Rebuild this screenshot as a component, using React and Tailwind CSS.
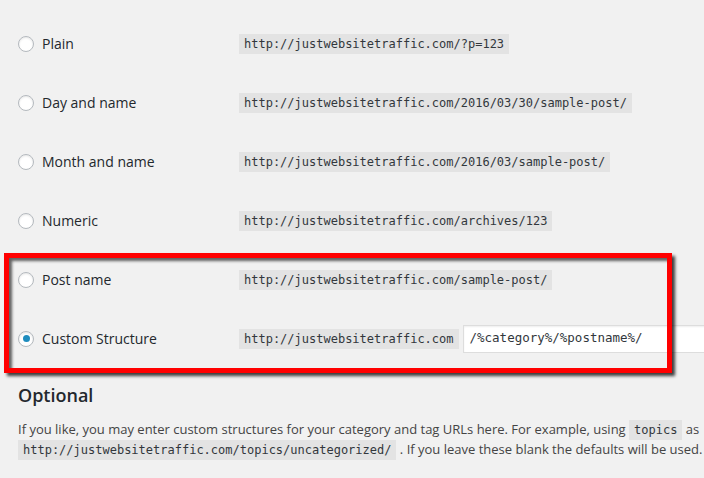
import React from 'react'

const rows = [
  { label: 'Plain', url: 'http://justwebsitetraffic.com/?p=123' },
  { label: 'Day and name', url: 'http://justwebsitetraffic.com/2016/03/30/sample-post/' },
  { label: 'Month and name', url: 'http://justwebsitetraffic.com/2016/03/sample-post/' },
  { label: 'Numeric', url: 'http://justwebsitetraffic.com/archives/123' },
  { label: 'Post name', url: 'http://justwebsitetraffic.com/sample-post/' },
]

function Radio({ checked }) {
  return (
    <span className="w-4 h-4 rounded-full bg-white border border-[#b4b9be] shadow-[inset_0_1px_2px_rgba(0,0,0,0.1)] flex items-center justify-center shrink-0">
      {checked && <span className="w-[7px] h-[7px] rounded-full bg-[#1e8cbe]" />}
    </span>
  )
}

function Code({ children }) {
  return (
    <code className="shrink-0 bg-[#e3e3e3] px-[5px] py-[3px] text-[12px] leading-[14px] text-[#32373c] font-['DejaVu_Sans_Mono',monospace]">
      {children}
    </code>
  )
}

function Label({ children, checked }) {
  return (
    <div className="w-[239px] shrink-0 flex items-center gap-[8px] pl-[18px] text-[14px]">
      <Radio checked={checked} />
      <span>{children}</span>
    </div>
  )
}

export default function App() {
  return (
    <div className="relative w-[704px] h-[478px] overflow-hidden bg-[#f1f1f1] font-['Open_Sans',sans-serif] text-[#23282d]">
      <div className="flex flex-col pt-[14px]">
        {rows.map((r) => (
          <div key={r.label} className="h-[59px] flex items-center">
            <Label>{r.label}</Label>
            <Code>{r.url}</Code>
          </div>
        ))}
        <div className="h-[59px] flex items-center">
          <Label checked>Custom Structure</Label>
          <Code>http://justwebsitetraffic.com</Code>
          <div className="ml-[4px] h-[28px] w-[260px] shrink-0 bg-white border border-[#ddd] shadow-[inset_0_1px_2px_rgba(0,0,0,0.07)] flex items-center px-[6px] text-[12.5px] text-[#32373c] font-['DejaVu_Sans_Mono',monospace]">
            /%category%/%postname%/
          </div>
        </div>
      </div>

      <h2 className="mt-[15px] pl-[18px] text-[18px] leading-[24px] font-semibold">Optional</h2>
      <div className="mt-[13px] pl-[18px] text-[13px] leading-[19px] text-[#444] whitespace-nowrap">
        <div>
          If you like, you may enter custom structures for your category and tag URLs here. For example, using{' '}
          <Code>topics</Code> as
        </div>
        <div className="mt-[1px]">
          <Code>http://justwebsitetraffic.com/topics/uncategorized/</Code> . If you leave these blank the defaults will be used.
        </div>
      </div>

      <div className="absolute left-[4px] top-[253px] w-[668px] h-[120px] border-[5px] border-[#ff0000] shadow-[3px_3px_3px_rgba(0,0,0,0.75),inset_3px_3px_3px_rgba(0,0,0,0.6)] pointer-events-none" />
    </div>
  )
}
